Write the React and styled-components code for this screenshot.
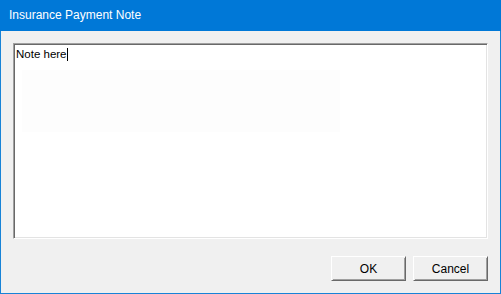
import React from "react";
import styled, { createGlobalStyle } from "styled-components";

const Global = createGlobalStyle`
  html, body { margin: 0; padding: 0; background: #f0f0f0; }
  #root { width: 501px; height: 294px; }
`;

const Window = styled.div`
  box-sizing: border-box;
  width: 501px;
  height: 294px;
  display: flex;
  flex-direction: column;
  border: 1px solid #1883d7;
  border-top: none;
  background: #f0f0f0;
  font-family: "Liberation Sans", Arial, sans-serif;
`;

const TitleBar = styled.div`
  height: 31px;
  margin: 0 -1px;
  background: #0078d7;
  color: #ffffff;
  font-size: 12px;
  display: flex;
  align-items: center;
  padding-left: 9px;
  padding-bottom: 1px;
  box-sizing: border-box;
  flex-shrink: 0;
`;

const Body = styled.div`
  flex: 1;
  display: flex;
  flex-direction: column;
  padding: 12px;
`;

const NoteBox = styled.div`
  position: relative;
  box-sizing: border-box;
  height: 196px;
  background: #ffffff;
  border-style: solid;
  border-width: 1px;
  border-color: #a0a0a0 #ffffff #ffffff #a0a0a0;
  box-shadow: inset 1px 1px 0 #696969, inset -1px -1px 0 #e3e3e3;
  padding: 4px 2px;
  font-size: 11.5px;
  color: #000;
  line-height: 13px;
`;

const Ghost = styled.div`
  position: absolute;
  left: 8px;
  top: 26px;
  width: 318px;
  height: 62px;
  background: #fdfdfd;
`;

const Caret = styled.span`
  display: inline-block;
  width: 1px;
  height: 13px;
  background: #000;
  vertical-align: top;
`;

const TextLine = styled.div`
  position: relative;
`;

const Footer = styled.div`
  display: flex;
  justify-content: flex-end;
  gap: 7px;
  margin-top: 17px;
`;

const Button = styled.button`
  box-sizing: border-box;
  width: 75px;
  height: 25px;
  background: #f0f0f0;
  border-style: solid;
  border-width: 1px;
  border-color: #ffffff #696969 #696969 #ffffff;
  box-shadow: inset 1px 1px 0 #f0f0f0, inset -1px -1px 0 #a0a0a0;
  font-family: "Liberation Sans", Arial, sans-serif;
  font-size: 12px;
  color: #000;
  padding: 0;
`;

export default function App() {
  return (
    <>
      <Global />
      <Window>
        <TitleBar>Insurance Payment Note</TitleBar>
        <Body>
          <NoteBox>
            <Ghost />
            <TextLine>
              Note here<Caret />
            </TextLine>
          </NoteBox>
          <Footer>
            <Button>OK</Button>
            <Button>Cancel</Button>
          </Footer>
        </Body>
      </Window>
    </>
  );
}
